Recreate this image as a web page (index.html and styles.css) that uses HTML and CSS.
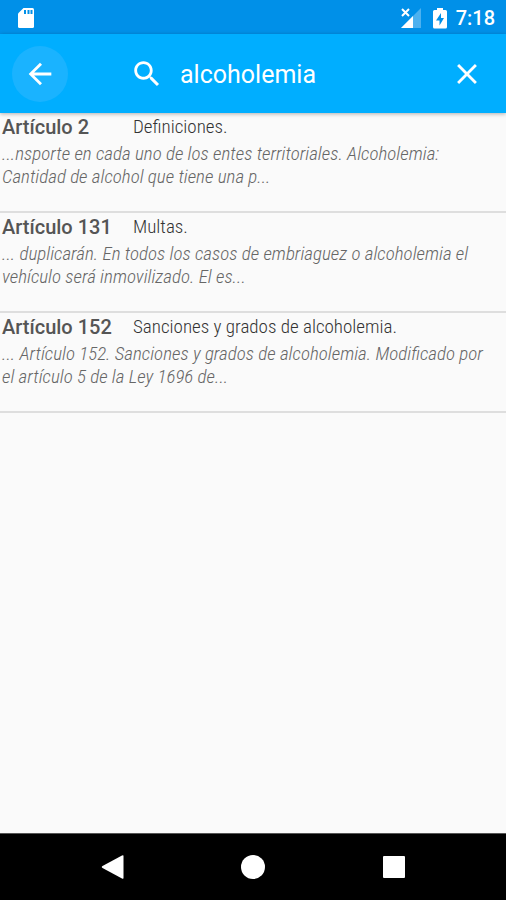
FILE: index.html
```html
<!DOCTYPE html>
<html lang="es">
<head>
<meta charset="utf-8">
<meta name="viewport" content="width=device-width, initial-scale=1">
<title>Buscar artículos</title>
<link rel="stylesheet" href="styles.css">
</head>
<body>
<header class="status-bar">
  <svg class="status-icon" viewBox="0 0 18 22" width="18" height="22" aria-hidden="true">
    <path fill="#fff" d="M6.500 1H15.500Q17 1 17 2.500V19.500Q17 21 15.500 21H2.500Q1 21 1 19.500V6.500Z"/>
    <path fill="#0090e8" d="M7 3h2v4H7zM10.500 3h2v4h-2zM13.500 3h2v4h-2z"/>
  </svg>
  <div class="status-right">
    <svg viewBox="0 0 24 22" width="24" height="22" aria-hidden="true">
      <path fill="#fff" fill-opacity=".3" d="M21 1V21H1Z"/>
      <path fill="#fff" d="M13 9V21H1Z"/>
      <path fill="#0090e8" d="M0 0h10v10H0z"/>
      <path stroke="#fff" stroke-width="2" d="M2 2l7 7M9 2l-7 7"/>
    </svg>
    <svg viewBox="0 0 16 22" width="16" height="22" aria-hidden="true">
      <path fill="#fff" d="M5 1h6v2h2.500Q15 3 15 4.500V20Q15 21.500 13.500 21.500H2.500Q1 21.500 1 20V4.500Q1 3 2.500 3H5Z"/>
      <path fill="#0090e8" d="M9 6L4 13.500H7.500V18.500L12 11H9Z"/>
    </svg>
    <time class="clock">7:18</time>
  </div>
</header>
<form class="search-bar" role="search">
  <button class="back" type="button" aria-label="Atrás">
    <svg viewBox="0 0 24 24" width="34" height="34" aria-hidden="true"><path fill="#fff" d="M20 11H7.830l5.590-5.590L12 4l-8 8 8 8 1.410-1.410L7.830 13H20v-2z"/></svg>
  </button>
  <label class="search-label" for="query" aria-label="Buscar">
    <svg viewBox="0 0 24 24" width="34" height="34" aria-hidden="true"><path fill="#fff" d="M15.500 14h-.79l-.28-.27C15.410 12.590 16 11.110 16 9.500 16 5.910 13.090 3 9.500 3S3 5.910 3 9.500 5.910 16 9.500 16c1.610 0 3.090-.59 4.230-1.570l.27.28v.79l5 4.990L20.490 19l-4.990-5zm-6 0C7.010 14 5 11.990 5 9.500S7.010 5 9.500 5 14 7.010 14 9.500 11.990 14 9.500 14z"/></svg>
  </label>
  <input class="query" id="query" type="text" value="alcoholemia">
  <button class="clear" type="button" aria-label="Borrar">
    <svg viewBox="0 0 24 24" width="34" height="34" aria-hidden="true"><path fill="#fff" d="M19 6.410L17.590 5 12 10.590 6.410 5 5 6.410 10.590 12 5 17.590 6.410 19 12 13.410 17.590 19 19 17.590 13.410 12z"/></svg>
  </button>
</form>
<main class="results">
  <article class="result">
    <h2 class="heading"><span class="number">Artículo 2</span><span class="name">Definiciones.</span></h2>
    <p class="snippet">...nsporte en cada uno de los entes territoriales. Alcoholemia:<br>Cantidad de alcohol que tiene una p...</p>
  </article>
  <article class="result">
    <h2 class="heading"><span class="number">Artículo 131</span><span class="name">Multas.</span></h2>
    <p class="snippet">... duplicarán. En todos los casos de embriaguez o alcoholemia el<br>vehículo será inmovilizado. El es...</p>
  </article>
  <article class="result">
    <h2 class="heading"><span class="number">Artículo 152</span><span class="name">Sanciones y grados de alcoholemia.</span></h2>
    <p class="snippet">... Artículo 152. Sanciones y grados de alcoholemia. Modificado por<br>el artículo 5 de la Ley 1696 de...</p>
  </article>
</main>
<nav class="nav-bar">
  <button type="button" aria-label="Volver"><svg viewBox="0 0 24 24" width="24" height="24" aria-hidden="true"><path fill="#fff" d="M22 .5Q23.500 -.3 23.500 1V23Q23.500 24.300 22 23.500L2.500 13Q1 12 2.500 11Z"/></svg></button>
  <button type="button" aria-label="Inicio"><svg viewBox="0 0 24 24" width="24" height="24" aria-hidden="true"><circle cx="12" cy="12" r="12" fill="#fff"/></svg></button>
  <button type="button" aria-label="Recientes"><svg viewBox="0 0 24 24" width="24" height="24" aria-hidden="true"><rect x="1" y="1" width="22" height="22" rx="1" fill="#fff"/></svg></button>
</nav>
</body>
</html>
```
FILE: styles.css
```css
* {
  box-sizing: border-box;
}

body {
  margin: 0;
  min-height: 100vh;
  display: flex;
  flex-direction: column;
  background: #fafafa;
  font-family: Roboto, "Liberation Sans", sans-serif;
}

svg {
  display: block;
}

button {
  display: flex;
  align-items: center;
  justify-content: center;
  margin: 0;
  padding: 0;
  border: 0;
  background: none;
}

.status-bar {
  display: flex;
  align-items: center;
  justify-content: space-between;
  height: 34px;
  padding: 1px 11px 0 17px;
  background: #0090e8;
}

.status-right {
  display: flex;
  align-items: center;
  gap: 8px;
}

.clock {
  color: #fff;
  font-size: 20px;
  font-weight: 500;
  line-height: 24px;
}

.search-bar {
  display: flex;
  align-items: center;
  height: 79px;
  padding: 0 11px 0 12px;
  background: #00aeff;
  box-shadow: 0 1px 4px rgba(0, 0, 0, 0.3);
}

.back {
  width: 56px;
  height: 56px;
  border-radius: 50%;
  background: #1ab3ff;
}

.search-label {
  margin-left: 62px;
}

.query {
  flex: 1;
  min-width: 0;
  margin-left: 16px;
  padding: 2px 0 0;
  border: 0;
  outline: 0;
  background: none;
  color: #fff;
  font-family: inherit;
  font-size: 25px;
  line-height: 32px;
}

.clear {
  width: 56px;
  height: 56px;
}

.results {
  flex: 1;
}

.result {
  min-height: 100px;
  padding: 0 2px;
  border-bottom: 2px solid #dedede;
}

.heading {
  display: flex;
  margin: 0;
  color: #555;
  font-size: 20px;
  line-height: 28px;
}

.number {
  width: 131px;
  font-weight: 500;
}

.name {
  color: #333;
  font-family: "Roboto Condensed", Roboto, sans-serif;
  font-size: 19px;
  font-weight: 300;
}

.snippet {
  margin: 1px 0 0;
  color: #666;
  font-family: "Roboto Condensed", Roboto, sans-serif;
  font-size: 19px;
  font-style: italic;
  font-weight: 300;
  line-height: 23px;
}

.nav-bar {
  display: flex;
  justify-content: center;
  gap: 44px;
  height: 67px;
  border-top: 1px solid #555;
  background: #000;
}

.nav-bar button {
  width: 97px;
}
```
